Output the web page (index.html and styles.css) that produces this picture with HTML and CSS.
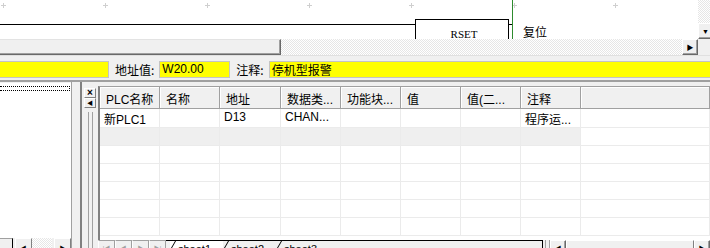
FILE: index.html
```html
<!DOCTYPE html>
<html lang="zh-CN">
<head>
    <meta charset="UTF-8">
    <title>PLC 梯形图</title>
    <link rel="stylesheet" href="styles.css">
</head>
<body>
    <div class="app">

        <!-- ladder diagram strip -->
        <div class="ladder">
            <div class="canvas">
                <div class="dot" style="left:1px"></div>
                <div class="dot" style="left:103px"></div>
                <div class="dot" style="left:205px"></div>
                <div class="dot" style="left:307px"></div>
                <div class="dot" style="left:409px"></div>
                <div class="dot" style="left:512px"></div>
                <div class="dot" style="left:613px"></div>
                <div class="rung"></div>
                <div class="box">RSET</div>
                <div class="tick"></div>
                <div class="rail"></div>
                <div class="coil-label">复位</div>
            </div>
            <div class="vscroll">
                <div class="track"></div>
                <div class="sbtn vbtn">&#9660;</div>
            </div>
        </div>

        <div class="hscroll">
            <div class="hthumb"></div>
            <div class="track"></div>
            <div class="sbtn hbtn">&#9654;</div>
            <div class="corner"></div>
        </div>

        <!-- selected element info -->
        <div class="infobar">
            <div class="field f1"></div>
            <span class="lbl">地址值:</span>
            <div class="field f2">W20.00</div>
            <span class="lbl">注释:</span>
            <div class="field f3">停机型报警</div>
        </div>

        <div class="lower">
            <div class="tree-col">
                <div class="tree">
                    <div class="focus-item"></div>
                </div>
                <div class="mini-scroll">
                    <div class="ms-stub"></div>
                    <div class="ms-btn">&#9664;</div>
                    <div class="ms-track"></div>
                    <div class="ms-btn">&#9654;</div>
                </div>
            </div>

            <div class="splitter">
                <div class="tool-btn">&#215;</div>
                <div class="tool-btn small">&#9664;</div>
            </div>

            <div class="sheet-col">
                <div class="sheet">
                    <div class="hd">PLC名称</div>
                    <div class="hd">名称</div>
                    <div class="hd">地址</div>
                    <div class="hd">数据类...</div>
                    <div class="hd">功能块...</div>
                    <div class="hd">值</div>
                    <div class="hd">值(二...</div>
                    <div class="hd">注释</div>
                    <div class="hd"></div>

                    <div class="cell">新PLC1</div>
                    <div class="cell"></div>
                    <div class="cell">D13</div>
                    <div class="cell">CHAN...</div>
                    <div class="cell"></div>
                    <div class="cell"></div>
                    <div class="cell"></div>
                    <div class="cell">程序运...</div>
                    <div class="cell"></div>

                    <div class="cell new"></div>
                    <div class="cell new"></div>
                    <div class="cell new"></div>
                    <div class="cell new"></div>
                    <div class="cell new"></div>
                    <div class="cell new"></div>
                    <div class="cell new"></div>
                    <div class="cell new"></div>
                    <div class="cell"></div>

                    <div class="cell"></div><div class="cell"></div><div class="cell"></div>
                    <div class="cell"></div><div class="cell"></div><div class="cell"></div>
                    <div class="cell"></div><div class="cell"></div><div class="cell"></div>

                    <div class="cell"></div><div class="cell"></div><div class="cell"></div>
                    <div class="cell"></div><div class="cell"></div><div class="cell"></div>
                    <div class="cell"></div><div class="cell"></div><div class="cell"></div>

                    <div class="cell"></div><div class="cell"></div><div class="cell"></div>
                    <div class="cell"></div><div class="cell"></div><div class="cell"></div>
                    <div class="cell"></div><div class="cell"></div><div class="cell"></div>

                    <div class="cell"></div><div class="cell"></div><div class="cell"></div>
                    <div class="cell"></div><div class="cell"></div><div class="cell"></div>
                    <div class="cell"></div><div class="cell"></div><div class="cell"></div>

                    <div class="cell"></div><div class="cell"></div><div class="cell"></div>
                    <div class="cell"></div><div class="cell"></div><div class="cell"></div>
                    <div class="cell"></div><div class="cell"></div><div class="cell"></div>
                </div>

                <div class="tabbar">
                    <div class="nav">|&#9664;</div>
                    <div class="nav">&#9664;</div>
                    <div class="nav">&#9654;</div>
                    <div class="nav">&#9654;|</div>
                    <div class="tabs">
                        <div class="tab active">sheet1</div>
                        <div class="tab">sheet2</div>
                        <div class="tab">sheet3</div>
                    </div>
                    <div class="tab-split"></div>
                    <div class="sbtn tbtn">&#9664;</div>
                    <div class="tthumb"></div>
                    <div class="sbtn tbtn">&#9654;</div>
                </div>
            </div>
        </div>
    </div>
</body>
</html>
```

FILE: styles.css
```css
* {
    box-sizing: border-box;
}
body {
    margin: 0;
    padding: 0;
    font-family: "Liberation Sans", "Noto Sans CJK SC", sans-serif;
    font-size: 12px;
    color: #000;
    background-color: #f0f0f0;
}
.app {
    width: 710px;
    height: 248px;
    overflow: hidden;
}

/* ladder strip */
.ladder {
    height: 39px;
    display: flex;
    background: #fff;
}
.canvas {
    flex: 1;
    position: relative;
    overflow: hidden;
}
.dot {
    position: absolute;
    top: 3px;
    width: 5px;
    height: 5px;
    background:
        linear-gradient(#cfcfcf, #cfcfcf) center / 5px 1px no-repeat,
        linear-gradient(#cfcfcf, #cfcfcf) center / 1px 5px no-repeat;
}
.rung {
    position: absolute;
    left: 0;
    top: 24px;
    width: 415px;
    height: 1px;
    background: #000;
}
.box {
    position: absolute;
    left: 415px;
    top: 19px;
    width: 94px;
    height: 40px;
    border: 1px solid #000;
    font-family: "Liberation Serif", serif;
    font-size: 11px;
    text-align: center;
    padding: 8px 0 0 4px;
}
.tick {
    position: absolute;
    left: 509px;
    top: 24px;
    width: 3px;
    height: 1px;
    background: #000;
}
.rail {
    position: absolute;
    left: 512px;
    top: 0;
    width: 1px;
    height: 39px;
    background: #2e8b2e;
}
.coil-label {
    position: absolute;
    left: 523px;
    top: 24px;
    font-family: "Noto Sans CJK SC", sans-serif;
    font-size: 12px;
    line-height: 16px;
}

/* scrollbars */
.track {
    flex: 1;
    background: repeating-conic-gradient(#ffffff 0 25%, #e6e6e6 0 50%) 0 0 / 2px 2px;
}
.sbtn {
    background: #f0f0f0;
    border-top: 1px solid #fff;
    border-left: 1px solid #fff;
    border-right: 1px solid #696969;
    border-bottom: 1px solid #696969;
    box-shadow: inset -1px -1px #a0a0a0;
    font-size: 7px;
    display: flex;
    align-items: center;
    justify-content: center;
}
.vscroll {
    width: 12px;
    display: flex;
    flex-direction: column;
}
.vbtn {
    height: 16px;
    width: 16px;
    justify-content: flex-start;
    padding-left: 3px;
}
.hscroll {
    height: 16px;
    display: flex;
}
.hthumb {
    width: 281px;
    background: #f0f0f0;
    border-top: 1px solid #e3e3e3;
    border-right: 1px solid #696969;
    border-bottom: 1px solid #696969;
    box-shadow: inset -1px -1px #a0a0a0;
}
.hbtn {
    width: 16px;
}
.corner {
    width: 12px;
    background: #f0f0f0;
}

/* info bar */
.infobar {
    height: 25px;
    display: flex;
    align-items: flex-start;
    padding-top: 5px;
    font-family: "Noto Sans CJK SC", sans-serif;
    border-top: 1px solid #e0e0e0;
}
.field {
    height: 17px;
    background: #ffff00;
    border: 1px solid #c4c4c4;
    font-family: "Liberation Sans", "Noto Sans CJK SC", sans-serif;
    font-size: 12px;
    line-height: 15px;
    padding-left: 2px;
}
.f1 {
    width: 109px;
    border-left: none;
}
.f2 {
    width: 71px;
}
.f3 {
    flex: 1;
    margin-right: -4px;
    font-family: "Noto Sans CJK SC", sans-serif;
}
.lbl {
    font-size: 12px;
    line-height: 17px;
    margin: 0 5px 0 6px;
}

/* lower part, taller than the window so the tab strip is clipped */
.lower {
    height: 176px;
    display: flex;
    border-top: 2px solid #a0a0a0;
}
.tree-col {
    width: 72px;
    display: flex;
    flex-direction: column;
    border-right: 1px solid #a0a0a0;
    padding-top: 1px;
}
.tree {
    flex: 1;
    background: #fff;
    padding-top: 3px;
}
.focus-item {
    height: 5px;
    width: 70px;
    border: 1px dotted #000;
    border-left: none;
}
.mini-scroll {
    height: 18px;
    display: flex;
    background: #f0f0f0;
    align-items: flex-start;
}
.ms-stub {
    width: 13px;
    height: 18px;
    border-right: 1px solid #000;
    border-top: 1px solid #a0a0a0;
}
.ms-btn {
    width: 17px;
    height: 18px;
    margin-left: 2px;
    border-top: 1px solid #fff;
    border-left: 1px solid #fff;
    border-right: 1px solid #808080;
    font-size: 6px;
    line-height: 18px;
    text-align: center;
}
.ms-track {
    flex: 1;
    height: 18px;
    background: repeating-conic-gradient(#ffffff 0 25%, #e6e6e6 0 50%) 0 0 / 2px 2px;
}

.splitter {
    width: 26px;
    background:
        linear-gradient(#808080, #808080) 8px 0 / 2px 100% no-repeat,
        linear-gradient(#a0a0a0, #a0a0a0) 16px 30px / 1px 100% no-repeat,
        linear-gradient(#a0a0a0, #a0a0a0) 20px 30px / 1px 100% no-repeat,
        #f0f0f0;
    padding: 6px 0 0 12px;
}
.tool-btn {
    width: 12px;
    height: 10px;
    background: #f0f0f0;
    border-top: 1px solid #fff;
    border-left: 1px solid #fff;
    border-right: 1px solid #808080;
    border-bottom: 1px solid #808080;
    font-size: 10px;
    font-weight: bold;
    line-height: 8px;
    text-align: center;
}
.tool-btn.small {
    font-size: 6px;
}

.sheet-col {
    flex: 1;
    display: flex;
    flex-direction: column;
    padding-top: 4px;
}
.sheet {
    flex: 1;
    display: grid;
    grid-template-columns: 60px 60px 61px 60px 60px 60px 60px 60px 1fr;
    grid-template-rows: 22px 19px repeat(7, 18px);
    border-top: 1px solid #a0a0a0;
    border-left: 2px solid #808080;
    background: #fff;
    overflow: hidden;
    min-height: 0;
}
.hd {
    background: #f0f0f0;
    border-right: 1px solid #a0a0a0;
    border-bottom: 1px solid #a0a0a0;
    box-shadow: inset 1px 1px #fff;
    padding: 3px 0 0 6px;
    white-space: nowrap;
}
.cell {
    border-right: 1px solid #ebebeb;
    border-bottom: 1px solid #ebebeb;
    padding: 1px 0 0 4px;
    white-space: nowrap;
}
.cell.new {
    background: #efefef;
}

/* sheet tabs */
.tabbar {
    height: 16px;
    display: flex;
    background: #f0f0f0;
    flex-shrink: 0;
}
.nav {
    width: 17px;
    border-left: 1px solid #fff;
    border-right: 1px solid #a0a0a0;
    border-top: 1px solid #a0a0a0;
    color: #a0a0a0;
    font-size: 6px;
    text-align: center;
    line-height: 14px;
}
.tabs {
    width: 377px;
    display: flex;
    border-top: 1px solid #000;
    border-right: 1px solid #000;
    padding-left: 4px;
}
.tab {
    position: relative;
    width: 53px;
    padding: 2px 0 0 8px;
    font-size: 11px;
    line-height: 12px;
}
.tab::before {
    content: "";
    position: absolute;
    left: 1px;
    top: 0;
    width: 1px;
    height: 14px;
    background: #000;
    transform: skewX(-30deg);
}
.tab.active {
    background: #fff;
}
.tab-split {
    width: 5px;
    border-left: 1px solid #a0a0a0;
    border-right: 1px solid #a0a0a0;
    margin-left: 2px;
}
.tbtn {
    width: 16px;
}
.tthumb {
    flex: 1;
    background: #f0f0f0;
    border: 1px solid #fff;
    border-right-color: #808080;
}
```
